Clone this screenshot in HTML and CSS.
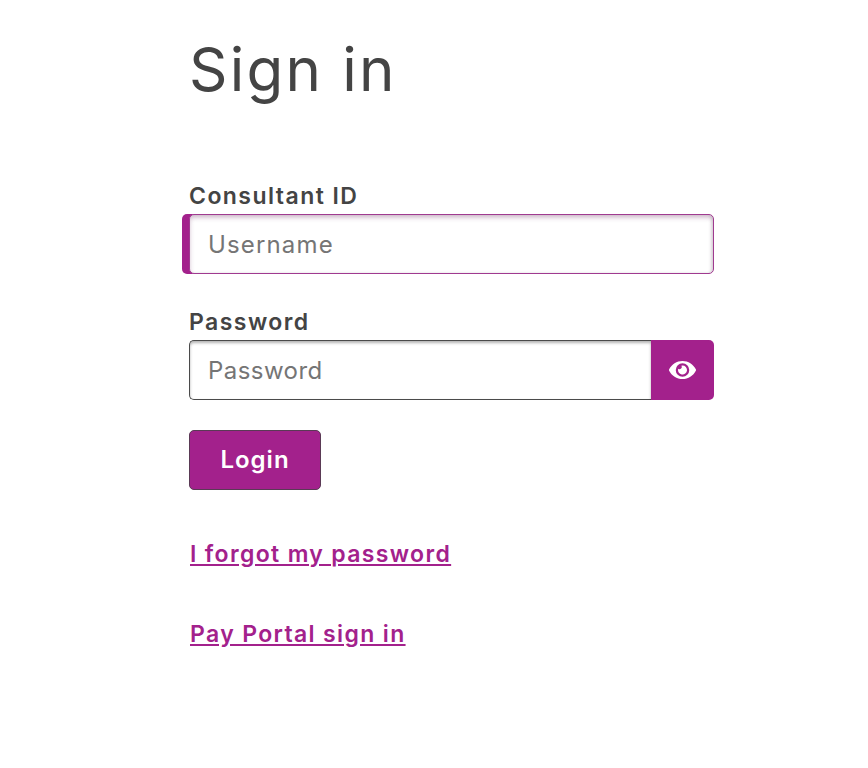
FILE: index.html
```html
<!DOCTYPE html>
<html lang="en">
<head>
<meta charset="utf-8">
<title>Sign in</title>
<link rel="stylesheet" href="styles.css">
</head>
<body>
<main class="page">
  <h1 class="title">Sign in</h1>
  <form class="form">
    <div class="field field-user">
      <label class="label" for="user">Consultant ID</label>
      <div class="control control-invalid">
        <input class="input input-invalid" id="user" type="text" placeholder="Username">
      </div>
    </div>
    <div class="field field-pass">
      <label class="label" for="pass">Password</label>
      <div class="control">
        <input class="input input-joined" id="pass" type="password" placeholder="Password">
        <button class="eye" type="button" aria-label="Show password">
          <svg class="eye-icon" viewBox="0 0 576 512" aria-hidden="true"><path fill="#fff" d="M572.52 241.4C518.29 135.59 410.93 64 288 64S57.68 135.64 3.48 241.41a32.35 32.35 0 0 0 0 29.19C57.71 376.41 165.07 448 288 448s230.32-71.64 284.52-177.41a32.35 32.35 0 0 0 0-29.19zM288 400a144 144 0 1 1 144-144 143.93 143.93 0 0 1-144 144zm0-240a95.31 95.31 0 0 0-25.31 3.79 47.85 47.85 0 0 1-66.9 66.9A95.78 95.78 0 1 0 288 160z"/></svg>
        </button>
      </div>
    </div>
    <button class="login" type="button">Login</button>
  </form>
  <p class="link-row link-row-first"><a class="link" href="#">I forgot my password</a></p>
  <p class="link-row link-row-second"><a class="link" href="#">Pay Portal sign in</a></p>
</main>
</body>
</html>
```
FILE: styles.css
```css
* { box-sizing: border-box; }
html, body { margin: 0; background: #fff; }
body { font-family: "Inter", "Open Sans", sans-serif; color: #444; }
.page { width: 525px; margin-left: 189px; padding-top: 31px; }
.title { margin: 0; font-size: 60px; line-height: 76px; font-weight: 400; color: #444; letter-spacing: 2.2px; }
.form { margin-top: 75px; display: flex; flex-direction: column; align-items: flex-start; }
.field { width: 100%; }
.field-pass { margin-top: 34px; }
.label { display: block; font-size: 23px; line-height: 28px; margin-bottom: 4px; font-weight: 600; color: #444; letter-spacing: 1.45px; }
.control { display: flex; height: 60px; width: 100%; border-radius: 5px; }
.control-invalid { position: relative; }
.control-invalid::before { content: ""; position: absolute; left: -7px; top: 0; bottom: 0; width: 13px; background: #a3218c; border-radius: 5px 0 0 5px; }
.input { flex: 1; min-width: 0; height: 60px; padding: 0 18px; border: 1px solid #4a4a4a; border-radius: 5px; font: 400 24px "Inter", sans-serif; letter-spacing: 0.45px; color: #444; background: #fff; box-shadow: inset 0 2px 3px rgba(0,0,0,0.3); outline: none; }
.input::placeholder { color: #757575; opacity: 1; }
.input-invalid { position: relative; border-color: #a03a90; letter-spacing: 1.15px; box-shadow: inset 0 3px 4px rgba(120,60,110,0.3), inset -2px 0 3px rgba(0,0,0,0.1); }
.input-joined { border-radius: 5px 0 0 5px; border-right: 0; }
.eye { width: 63px; height: 60px; flex: none; display: flex; align-items: center; justify-content: center; padding: 0; border: 0; background: #a3218c; border-radius: 0 5px 5px 0; }
.eye-icon { width: 27px; height: 24px; display: block; }
.login { margin-top: 30px; width: 132px; height: 60px; padding: 0 0 2px; border: 1px solid #5a3a55; border-radius: 5px; background: #a3218c; color: #fff; font: 600 24px "Inter", sans-serif; letter-spacing: 1px; }
.link-row { margin: 0; padding-left: 1px; }
.link-row-first { margin-top: 46px; line-height: 36px; }
.link-row-second { margin-top: 44px; line-height: 32px; }
.link { color: #a3218c; font-size: 23px; font-weight: 600; text-decoration: underline; letter-spacing: 1.35px; }
```
